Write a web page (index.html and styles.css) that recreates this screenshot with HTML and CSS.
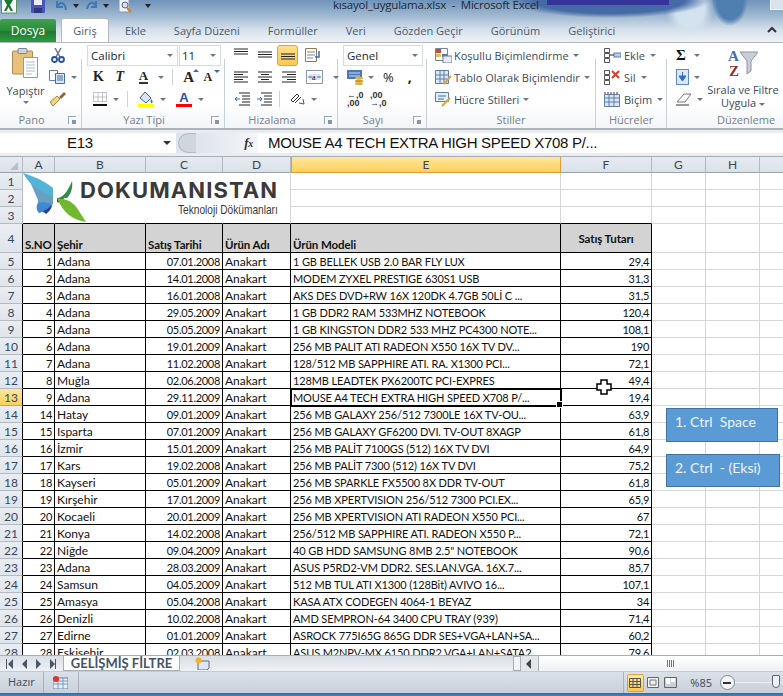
FILE: index.html
```html
<!DOCTYPE html>
<html lang="tr">
<head>
  <meta charset="UTF-8">
  <title>kısayol_uygulama.xlsx - Microsoft Excel</title>
  <link rel="stylesheet" href="styles.css">
</head>
<body>
  <div class="window">
    <div class="top">
      <div class="titlebar">
        <svg class="qa qa-excel" width="16" height="14" viewBox="0 0 16 14"><rect x="0.5" y="-3" width="15" height="16" fill="#fff" stroke="#5f8f66"/><path d="M3 0l3 5-3 6h2.500l2-4 2 4H12L9 5l3-5" fill="#1c7a35"/></svg>
        <svg class="qa qa-save" width="14" height="13" viewBox="0 0 14 13"><rect y="-2" width="14" height="15" rx="1" fill="#4a55b5"/><rect x="3" y="-2" width="8" height="7" fill="#e8edf6"/><rect x="3" y="8" width="8" height="5" fill="#2f3680"/></svg>
        <svg class="qa qa-undo" width="15" height="12" viewBox="0 0 15 12"><path d="M4 1v6h6M4 7c3-6 8-5 9 3" fill="none" stroke="#3f78b6" stroke-width="2"/></svg>
        <span class="qa-arrow"></span>
        <svg class="qa qa-redo" width="14" height="12" viewBox="0 0 14 12"><path d="M10 1v6H5M10 7C8 1 3 1 1 9" fill="none" stroke="#3f78b6" stroke-width="2"/></svg>
        <span class="qa-arrow qa-arrow-2"></span>
        <svg class="qa qa-preview" width="13" height="14" viewBox="0 0 13 14"><rect y="-2" width="10" height="14" fill="#eef2f8" stroke="#8a99ad"/><circle cx="6" cy="5" r="3" fill="#cfe1f2" stroke="#56687f"/><path d="M8 8l4 4" stroke="#c9862a" stroke-width="2"/></svg>
        <span class="qa-custom"></span>
        <span class="doc-title">kısayol_uygulama.xlsx &nbsp;-&nbsp; Microsoft Excel</span>
        <span class="win-btn"></span>
      </div>
      <div class="tabs">
        <div class="file-tab">Dosya</div>
        <div class="tab tab-active">Giriş</div>
        <div class="tab">Ekle</div>
        <div class="tab">Sayfa Düzeni</div>
        <div class="tab">Formüller</div>
        <div class="tab">Veri</div>
        <div class="tab">Gözden Geçir</div>
        <div class="tab">Görünüm</div>
        <div class="tab">Geliştirici</div>
        <svg class="ribbon-toggle" width="12" height="8" viewBox="0 0 12 8"><path d="M2 6l4-4 4 4" fill="none" stroke="#333" stroke-width="2"/></svg>
      </div>
    </div>

    <div class="ribbon">
      <section class="group g-pano">
        <div class="group-body pano-body">
          <div class="paste">
            <svg width="27" height="31" viewBox="0 0 27 31"><rect x="0.500" y="3" width="20" height="23" rx="1" fill="#e8c27a" stroke="#a98a55"/><rect x="6" y="0.500" width="9" height="5" rx="1" fill="#cdd3da" stroke="#7d8792"/><path d="M11.500 9.500h14v20h-14z" fill="#fff" stroke="#8b9aae"/><path d="M14 14h9M14 17h9M14 20h9M14 23h9M14 26h6" stroke="#a9bcd2"/></svg>
            <span class="paste-text">Yapıştır</span>
            <span class="arrow"></span>
          </div>
          <div class="pano-tools">
            <svg width="14" height="15" viewBox="0 0 14 15"><path d="M4 0l5 9M10 0L5 9" stroke="#6c7a8b" stroke-width="1.500"/><circle cx="3.500" cy="11.500" r="2.500" fill="none" stroke="#2b4f9c" stroke-width="1.800"/><circle cx="10.500" cy="11.500" r="2.500" fill="none" stroke="#2b4f9c" stroke-width="1.800"/></svg>
            <div class="pano-copy"><svg width="16" height="14" viewBox="0 0 16 14"><path d="M.5.500h8v10h-8z" fill="#fff" stroke="#5d7ea8"/><path d="M6.500 3.500h9v10h-9z" fill="#dbe8f6" stroke="#3f6ea6"/><path d="M8 6h6M8 8h6M8 10h6" stroke="#3f6ea6"/></svg><span class="arrow"></span></div>
            <svg width="17" height="15" viewBox="0 0 17 15"><path d="M10 6l5-5 2 2-5 5z" fill="#8b6a38"/><path d="M11 8L8 5 1 11l3 4z" fill="#f0d484" stroke="#a9863f"/></svg>
          </div>
        </div>
        <div class="group-label has-launcher">Pano<span class="launcher"></span></div>
      </section>

      <section class="group g-font">
        <div class="group-body">
          <div class="row combo-row">
            <div class="combo combo-font">Calibri<span class="arrow"></span></div>
            <div class="combo combo-size">11<span class="arrow"></span></div>
          </div>
          <div class="row font-row">
            <b class="fb">K</b>
            <i class="fi">T</i>
            <span class="fu">A</span><span class="arrow"></span>
            <span class="vsep"></span>
            <span class="grow">A<em></em></span>
            <span class="shrink">A<em></em></span>
          </div>
          <div class="row font-row2">
            <svg width="14" height="14" viewBox="0 0 14 14"><path d="M.5.500h13v9H.5zM5 .5v9M9.500.5v9M.5 5h13" fill="none" stroke="#8a8f96" stroke-dasharray="1 1"/><path d="M0 13h14" stroke="#111" stroke-width="2"/></svg>
            <span class="arrow"></span>
            <span class="vsep"></span>
            <svg width="16" height="16" viewBox="0 0 16 16"><path d="M7 1l6 6-5 5-6-5z" fill="#d8e6f4" stroke="#41618c"/><path d="M13 8c2 2 2 3 1 4s-2-1-1-4z" fill="#2f6fc0"/><rect y="13" width="16" height="3" fill="#ffff00"/></svg>
            <span class="arrow"></span>
            <span class="colorA">A</span>
            <span class="arrow"></span>
          </div>
        </div>
        <div class="group-label has-launcher">Yazı Tipi<span class="launcher"></span></div>
      </section>

      <section class="group g-align">
        <div class="group-body">
          <div class="row align-row">
            <svg class="lines" width="14" height="14" viewBox="0 0 14 14"><path d="M0 1h14M0 3.500h14M0 6h14" stroke="#222"/></svg>
            <svg class="lines" width="14" height="14" viewBox="0 0 14 14"><path d="M0 4h14M0 6.500h14M0 9h14" stroke="#222"/></svg>
            <div class="align-active"><svg width="14" height="14" viewBox="0 0 14 14"><path d="M0 6h14M0 8.500h14M0 11h14" stroke="#222"/></svg></div>
            <svg width="16" height="14" viewBox="0 0 16 14"><path d="M.5.500h11v13H.5z" fill="#fff" stroke="#8d7a58"/><path d="M2 4h8M2 7h8M2 10h6" stroke="#7b8797"/><path d="M14 3v6H10" fill="none" stroke="#2f6fc0" stroke-width="1.500"/></svg>
          </div>
          <div class="row align-row">
            <svg class="lines" width="14" height="14" viewBox="0 0 14 14"><path d="M0 2h14M0 4.500h9M0 7h14M0 9.500h9M0 12h14" stroke="#222"/></svg>
            <svg class="lines" width="14" height="14" viewBox="0 0 14 14"><path d="M0 2h14M3 4.500h8M0 7h14M3 9.500h8M0 12h14" stroke="#222"/></svg>
            <svg class="lines line-right" width="14" height="14" viewBox="0 0 14 14"><path d="M0 2h14M5 4.500h9M0 7h14M5 9.500h9M0 12h14" stroke="#222"/></svg>
            <svg class="merge" width="17" height="14" viewBox="0 0 17 14"><path d="M.5.500h16v13H.5z" fill="#fff" stroke="#8a97a8"/><rect x="3" y="4" width="11" height="6" fill="#d7e4f3"/><path d="M2 7h4M11 7h4" stroke="#2f6fc0"/><text x="6" y="10" font-size="8" font-family="Liberation Serif">a</text></svg>
            <span class="arrow"></span>
          </div>
          <div class="row align-row3">
            <svg width="16" height="14" viewBox="0 0 16 14"><path d="M5 1h11M8 4h8M8 7h8M8 10h8M5 13h11" stroke="#222"/><path d="M6 7H1m2-2L1 7l2 2" fill="none" stroke="#2f6fc0"/></svg>
            <svg width="16" height="14" viewBox="0 0 16 14"><path d="M5 1h11M8 4h8M8 7h8M8 10h8M5 13h11" stroke="#222"/><path d="M1 7h5M4 5l2 2-2 2" fill="none" stroke="#2f6fc0"/></svg>
            <span class="vsep"></span>
            <svg width="15" height="14" viewBox="0 0 15 14"><path d="M1 8l6-6 2 2-6 6zM5 11l6-6" fill="none" stroke="#333"/><path d="M9 11l5 1-1-5" fill="none" stroke="#555"/></svg>
            <span class="arrow"></span>
          </div>
        </div>
        <div class="group-label has-launcher">Hizalama<span class="launcher"></span></div>
      </section>

      <section class="group g-number">
        <div class="group-body">
          <div class="row combo-row"><div class="combo combo-genel">Genel<span class="arrow"></span></div></div>
          <div class="row num-row">
            <svg width="17" height="15" viewBox="0 0 17 15"><rect width="15" height="9" fill="#4a78b8"/><path d="M2 3h11M2 6h11" stroke="#cfe0f3"/><ellipse cx="12" cy="8" rx="4" ry="1.500" fill="#e0b040"/><ellipse cx="12" cy="11" rx="4" ry="1.500" fill="#d19a2a"/><ellipse cx="12" cy="13.500" rx="4" ry="1.500" fill="#e0b040"/></svg>
            <span class="arrow"></span>
            <span class="pct">%</span>
            <span class="comma">,</span>
          </div>
          <div class="row num-row3">
            <span class="dec">←,0<br>,00</span>
            <span class="dec">,00<br>→,0</span>
          </div>
        </div>
        <div class="group-label has-launcher">Sayı<span class="launcher"></span></div>
      </section>

      <section class="group g-styles">
        <div class="group-body">
          <div class="row style-row">
            <svg width="17" height="15" viewBox="0 0 17 15"><path d="M.5.500h12v12H.5z" fill="#fff" stroke="#76859a"/><path d="M1 1h5v4H1z" fill="#c9483c"/><path d="M7 6h5v3H7z" fill="#4a78b8"/><path d="M1 6h5v3H1z" fill="#e0c060"/><rect x="8" y="8" width="9" height="7" fill="#e8edf3" stroke="#6c7a8b"/></svg>
            <span>Koşullu Biçimlendirme</span><span class="arrow"></span>
          </div>
          <div class="row style-row">
            <svg width="17" height="15" viewBox="0 0 17 15"><path d="M.5.500h13v13H.5z" fill="#dce8f5" stroke="#5f7fa8"/><path d="M0 5h14M0 9h14M5 0v14M9 0v14" stroke="#5f7fa8"/><path d="M9 14l7-8" stroke="#d9a441" stroke-width="2"/></svg>
            <span>Tablo Olarak Biçimlendir</span><span class="arrow"></span>
          </div>
          <div class="row style-row">
            <svg width="17" height="15" viewBox="0 0 17 15"><path d="M.5.500h13v9H.5z" fill="#e6eef8" stroke="#5f7fa8"/><path d="M3 4h8M3 7h6" stroke="#3f6ea6"/><path d="M7 14l8-8" stroke="#d9a441" stroke-width="2"/></svg>
            <span>Hücre Stilleri</span><span class="arrow"></span>
          </div>
        </div>
        <div class="group-label">Stiller</div>
      </section>

      <section class="group g-cells">
        <div class="group-body">
          <div class="row cell-row">
            <svg width="17" height="15" viewBox="0 0 17 15"><path d="M.5.500h5v4h-5zM.5 10.500h5v4h-5zM.5 5.500h5v4h-5z" fill="#fff" stroke="#555"/><rect x="10" y="5" width="7" height="4" fill="#b9cfe8" stroke="#5f7fa8"/><path d="M6 7h4" stroke="#222"/></svg>
            <span>Ekle</span><span class="arrow"></span>
          </div>
          <div class="row cell-row">
            <svg width="17" height="15" viewBox="0 0 17 15"><path d="M.5.500h5v4h-5zM.5 10.500h5v4h-5zM.5 5.500h5v4h-5z" fill="#fff" stroke="#555"/><path d="M8 1l7 7M15 1L8 8" stroke="#d2402c" stroke-width="2"/></svg>
            <span>Sil</span><span class="arrow"></span>
          </div>
          <div class="row cell-row">
            <svg width="17" height="15" viewBox="0 0 17 15"><path d="M.5 2.500h15v12H.5z" fill="#dbe6f3" stroke="#5f7fa8"/><path d="M0 6h16M0 10h16M5 3v12M10 3v12" stroke="#5f7fa8"/><path d="M1 0v2M4 0v2M7 0v2M10 0v2M13 0v2" stroke="#333"/></svg>
            <span>Biçim</span><span class="arrow"></span>
          </div>
        </div>
        <div class="group-label">Hücreler</div>
      </section>

      <section class="group g-edit">
        <div class="group-body edit-body">
          <div class="edit-tools">
            <div class="row edit-row"><span class="sigma">Σ</span><span class="arrow"></span></div>
            <div class="row edit-row"><svg width="13" height="16" viewBox="0 0 13 16"><rect x=".5" y=".5" width="12" height="15" fill="#dce8f6" stroke="#5f8cc0"/><path d="M6.500 3v6M3 7l3.500 5L10 7z" fill="#2f6fc0" stroke="#2f6fc0"/></svg><span class="arrow"></span></div>
            <div class="row edit-row"><svg width="16" height="13" viewBox="0 0 16 13"><path d="M1 9l7-8h7l-6 8z" fill="#fff" stroke="#777"/><path d="M0 12h13" stroke="#333"/></svg><span class="arrow"></span></div>
          </div>
          <div class="sort">
            <svg width="30" height="30" viewBox="0 0 30 30"><path d="M12 5h18l-7 9v10l-4 3V14z" fill="#c9ced6" stroke="#8e96a2"/><text x="0" y="14" font-size="15" font-weight="700" font-family="Liberation Serif" fill="#3c6fb5">A</text><text x="1" y="29" font-size="15" font-weight="700" font-family="Liberation Serif" fill="#8f2f2f">Z</text></svg>
            <span>Sırala ve Filtre</span>
            <span>Uygula<i class="arrow"></i></span>
          </div>
        </div>
        <div class="group-label edit-label">Düzenleme</div>
      </section>
    </div>

    <div class="formula-bar">
      <div class="name-box">E13<span class="name-arrow"></span></div>
      <div class="formula-mid"><span class="knob"></span><i class="fx">f<small>x</small></i></div>
      <div class="formula-input">MOUSE A4 TECH EXTRA HIGH SPEED X708 P/...</div>
    </div>

    <div class="sheet">
      <table class="cells">
        <colgroup>
          <col class="c-rh"><col class="c-a"><col class="c-b"><col class="c-c"><col class="c-d"><col class="c-e"><col class="c-f"><col class="c-g"><col class="c-g"><col class="c-g">
        </colgroup>
        <tr class="col-head"><th class="corner"><span></span></th><th>A</th><th>B</th><th>C</th><th>D</th><th class="on">E</th><th>F</th><th>G</th><th>H</th><th></th></tr>
        <tr><th>1</th><td></td><td></td><td></td><td></td><td></td><td></td><td></td><td></td><td></td></tr>
        <tr><th>2</th><td></td><td></td><td></td><td></td><td></td><td></td><td></td><td></td><td></td></tr>
        <tr class="before-head"><th>3</th><td></td><td></td><td></td><td></td><td></td><td></td><td></td><td></td><td></td></tr>
        <tr class="head"><th class="bl">4</th><td class="d">S.NO</td><td class="d">Şehir</td><td class="d">Satış Tarihi</td><td class="d">Ürün Adı</td><td class="d">Ürün Modeli</td><td class="d mid">Satış Tutarı</td><td></td><td></td><td></td></tr>
        <tr><th class="bl">5</th><td class="d r">1</td><td class="d">Adana</td><td class="d r">07.01.2008</td><td class="d">Anakart</td><td class="d m">1 GB BELLEK USB 2.0 BAR FLY LUX</td><td class="d r">29,4</td><td></td><td></td><td></td></tr>
        <tr><th class="bl">6</th><td class="d r">2</td><td class="d">Adana</td><td class="d r">14.01.2008</td><td class="d">Anakart</td><td class="d m">MODEM ZYXEL PRESTIGE 630S1 USB</td><td class="d r">31,3</td><td></td><td></td><td></td></tr>
        <tr><th class="bl">7</th><td class="d r">3</td><td class="d">Adana</td><td class="d r">16.01.2008</td><td class="d">Anakart</td><td class="d m">AKS DES DVD+RW 16X 120DK 4.7GB 50Lİ C ...</td><td class="d r">31,5</td><td></td><td></td><td></td></tr>
        <tr><th class="bl">8</th><td class="d r">4</td><td class="d">Adana</td><td class="d r">29.05.2009</td><td class="d">Anakart</td><td class="d m">1 GB DDR2 RAM 533MHZ NOTEBOOK</td><td class="d r">120,4</td><td></td><td></td><td></td></tr>
        <tr><th class="bl">9</th><td class="d r">5</td><td class="d">Adana</td><td class="d r">05.05.2009</td><td class="d">Anakart</td><td class="d m">1 GB KINGSTON DDR2 533 MHZ PC4300 NOTE...</td><td class="d r">108,1</td><td></td><td></td><td></td></tr>
        <tr><th class="bl">10</th><td class="d r">6</td><td class="d">Adana</td><td class="d r">19.01.2009</td><td class="d">Anakart</td><td class="d m">256 MB PALIT ATI RADEON X550 16X TV DV...</td><td class="d r">190</td><td></td><td></td><td></td></tr>
        <tr><th class="bl">11</th><td class="d r">7</td><td class="d">Adana</td><td class="d r">11.02.2008</td><td class="d">Anakart</td><td class="d m">128/512 MB SAPPHIRE ATI. RA. X1300 PCI...</td><td class="d r">72,1</td><td></td><td></td><td></td></tr>
        <tr><th class="bl">12</th><td class="d r">8</td><td class="d">Muğla</td><td class="d r">02.06.2008</td><td class="d">Anakart</td><td class="d m">128MB LEADTEK PX6200TC PCI-EXPRES</td><td class="d r">49,4</td><td></td><td></td><td></td></tr>
        <tr><th class="bl on">13</th><td class="d r">9</td><td class="d">Adana</td><td class="d r">29.11.2009</td><td class="d">Anakart</td><td class="d m selected">MOUSE A4 TECH EXTRA HIGH SPEED X708 P/...</td><td class="d r">19,4</td><td></td><td></td><td></td></tr>
        <tr><th class="bl">14</th><td class="d r">14</td><td class="d">Hatay</td><td class="d r">09.01.2009</td><td class="d">Anakart</td><td class="d m">256 MB GALAXY 256/512 7300LE 16X TV-OU...</td><td class="d r">63,9</td><td></td><td></td><td></td></tr>
        <tr><th class="bl">15</th><td class="d r">15</td><td class="d">Isparta</td><td class="d r">07.01.2009</td><td class="d">Anakart</td><td class="d m">256 MB GALAXY GF6200 DVI. TV-OUT 8XAGP</td><td class="d r">61,8</td><td></td><td></td><td></td></tr>
        <tr><th class="bl">16</th><td class="d r">16</td><td class="d">İzmir</td><td class="d r">15.01.2009</td><td class="d">Anakart</td><td class="d m">256 MB PALİT 7100GS (512) 16X TV DVI</td><td class="d r">64,9</td><td></td><td></td><td></td></tr>
        <tr><th class="bl">17</th><td class="d r">17</td><td class="d">Kars</td><td class="d r">19.02.2008</td><td class="d">Anakart</td><td class="d m">256 MB PALİT 7300 (512) 16X TV DVI</td><td class="d r">75,2</td><td></td><td></td><td></td></tr>
        <tr><th class="bl">18</th><td class="d r">18</td><td class="d">Kayseri</td><td class="d r">05.01.2009</td><td class="d">Anakart</td><td class="d m">256 MB SPARKLE FX5500 8X DDR TV-OUT</td><td class="d r">61,8</td><td></td><td></td><td></td></tr>
        <tr><th class="bl">19</th><td class="d r">19</td><td class="d">Kırşehir</td><td class="d r">17.01.2009</td><td class="d">Anakart</td><td class="d m">256 MB XPERTVISION 256/512 7300 PCI.EX...</td><td class="d r">65,9</td><td></td><td></td><td></td></tr>
        <tr><th class="bl">20</th><td class="d r">20</td><td class="d">Kocaeli</td><td class="d r">20.01.2009</td><td class="d">Anakart</td><td class="d m">256 MB XPERTVISION ATI RADEON X550 PCI...</td><td class="d r">67</td><td></td><td></td><td></td></tr>
        <tr><th class="bl">21</th><td class="d r">21</td><td class="d">Konya</td><td class="d r">14.02.2008</td><td class="d">Anakart</td><td class="d m">256/512 MB SAPPHIRE ATI. RADEON X550 P...</td><td class="d r">72,1</td><td></td><td></td><td></td></tr>
        <tr><th class="bl">22</th><td class="d r">22</td><td class="d">Niğde</td><td class="d r">09.04.2009</td><td class="d">Anakart</td><td class="d m">40 GB HDD SAMSUNG 8MB 2.5" NOTEBOOK</td><td class="d r">90,6</td><td></td><td></td><td></td></tr>
        <tr><th class="bl">23</th><td class="d r">23</td><td class="d">Adana</td><td class="d r">28.03.2009</td><td class="d">Anakart</td><td class="d m">ASUS P5RD2-VM DDR2. SES.LAN.VGA. 16X.7...</td><td class="d r">85,7</td><td></td><td></td><td></td></tr>
        <tr><th class="bl">24</th><td class="d r">24</td><td class="d">Samsun</td><td class="d r">04.05.2009</td><td class="d">Anakart</td><td class="d m">512 MB TUL ATI X1300 (128Bit) AVIVO 16...</td><td class="d r">107,1</td><td></td><td></td><td></td></tr>
        <tr><th class="bl">25</th><td class="d r">25</td><td class="d">Amasya</td><td class="d r">05.04.2008</td><td class="d">Anakart</td><td class="d m">KASA ATX CODEGEN 4064-1 BEYAZ</td><td class="d r">34</td><td></td><td></td><td></td></tr>
        <tr><th class="bl">26</th><td class="d r">26</td><td class="d">Denizli</td><td class="d r">10.02.2008</td><td class="d">Anakart</td><td class="d m">AMD SEMPRON-64 3400 CPU TRAY (939)</td><td class="d r">71,4</td><td></td><td></td><td></td></tr>
        <tr><th class="bl">27</th><td class="d r">27</td><td class="d">Edirne</td><td class="d r">01.01.2009</td><td class="d">Anakart</td><td class="d m">ASROCK 775I65G 865G DDR SES+VGA+LAN+SA...</td><td class="d r">60,2</td><td></td><td></td><td></td></tr>
        <tr><th class="bl">28</th><td class="d r">28</td><td class="d">Eskişehir</td><td class="d r">02.03.2008</td><td class="d">Anakart</td><td class="d m">ASUS M2NPV-MX 6150 DDR2 VGA+LAN+SATA2</td><td class="d r">79,6</td><td></td><td></td><td></td></tr>
      </table>

      <div class="logo">
        <svg class="logo-mark" width="63" height="50" viewBox="0 0 63 50">
          <path d="M0 0c10 3 22 8 30 15v12C21 24 7 13 0 0z" fill="#55b4d6"/>
          <path d="M8 11c7 6 15 10 22 13v7c-3 4-6 7-9 9-5-2-7-7-6-13z" fill="#6a9fc4"/>
          <path d="M15 30c4-1 8-1 13 1-2 4-7 8-12 9-3-3-3-7-1-10z" fill="#3d8ad2"/>
          <path d="M20 38c3-1 6-3 8-6l1 1c-1 3-3 6-6 8z" fill="#27409a"/>
          <path d="M34 25c5 0 10-5 15-17 1 7-1 13-5 17z" fill="#2f8f48"/>
          <path d="M34 25l7 0-3 5-4-1z" fill="#166a36"/>
          <path d="M34 25c9 1 15 3 20 10l9 14c-13-2-23-9-29-24z" fill="#6fb82f"/>
        </svg>
        <div class="logo-text">
          <div class="logo-name">DOKUMANISTAN</div>
          <div class="logo-sub">Teknoloji Dökümanları</div>
        </div>
      </div>

      <svg class="cursor" width="16" height="16" viewBox="0 0 16 16"><path d="M5 1h6v4h4v6h-4v4H5v-4H1V5h4z" fill="#fff" stroke="#000" stroke-width="1.500"/></svg>
      <div class="note note-1">1. Ctrl &nbsp;Space</div>
      <div class="note note-2">2. Ctrl &nbsp;- (Eksi)</div>
    </div>

    <div class="sheet-tabs">
      <div class="sheet-nav">
        <svg width="50" height="10" viewBox="0 0 50 10"><path d="M0 0v10h1V0zM7 0L2 5l5 5zM21 0l-5 5 5 5zM30 0l5 5-5 5zM44 0l5 5-5 5zM50 0v10h-1V0z" fill="#4a5666"/></svg>
      </div>
      <div class="sheet-tab">GELİŞMİŞ FİLTRE</div>
      <div class="new-tab">
        <svg width="15" height="13" viewBox="0 0 15 13"><path d="M3 4h11v7l-2 2H3z" fill="#dfe8f2" stroke="#5c6d82"/><circle cx="3.500" cy="3.500" r="3" fill="#f1b22e"/></svg>
      </div>
      <div class="tab-fill"></div>
      <div class="splitter"></div>
      <div class="scroll-left"></div>
      <div class="scroll-thumb"><span></span></div>
    </div>

    <div class="statusbar">
      <span class="ready">Hazır</span>
      <span class="status-macro">
        <svg width="15" height="13" viewBox="0 0 15 13"><rect y="2" width="15" height="11" fill="#e6eef7" stroke="#5f7fa8"/><path d="M0 5h15M0 8h15M5 2v11M10 2v11" stroke="#7d9abd"/><circle cx="3" cy="3" r="3" fill="#d8372b"/></svg>
      </span>
      <div class="status-right">
        <span class="view view-on"><svg width="12" height="10" viewBox="0 0 12 10"><path d="M.5.500h11v9H.5zM0 3.500h12M0 6.500h12M4 0v10M8 0v10" fill="none" stroke="#555"/></svg></span>
        <span class="view"><svg width="12" height="11" viewBox="0 0 12 11"><path d="M.5.500h11v10H.5z" fill="#eef1f5" stroke="#666"/><path d="M3 3h6v5H3z" fill="none" stroke="#777"/></svg></span>
        <span class="view"><svg width="13" height="11" viewBox="0 0 13 11"><path d="M.5.500h12v10H.5z" fill="#c9d1dc" stroke="#666"/><path d="M2 1h4v6H2zM7 1h4v4H7z" fill="#fff"/></svg></span>
        <span class="zoom-level">%85</span>
        <span class="zoom-minus"></span>
        <span class="zoom-track"><i></i></span>
      </div>
    </div>
    <div class="taskbar-edge"></div>
  </div>
</body>
</html>
```

FILE: styles.css
```css
* {
  box-sizing: border-box;
}
html, body {
  margin: 0;
  padding: 0;
}
body {
  width: 783px;
  height: 696px;
  overflow: hidden;
  font-family: "Open Sans", sans-serif;
  font-size: 11px;
  color: #3b4a5e;
  background: #fff;
}
svg {
  display: block;
  flex: none;
}
.window {
  display: flex;
  flex-direction: column;
  height: 696px;
}

/* title + tabs share the blurred glass background */
.top {
  height: 43px;
  background:
    linear-gradient(#34349a, #34349a) 547px 0 / 122px 5px no-repeat,
    radial-gradient(ellipse 100px 18px at 610px 0, #466aa6 75%, transparent 100%),
    radial-gradient(ellipse 18px 26px at 730px 0, #4f7fb0 75%, transparent 100%),
    radial-gradient(ellipse 24px 30px at 690px 8px, #d3e2ee 60%, transparent 100%),
    linear-gradient(#6f93ba 0, #a3bbd3 40%, #d5e0ea 70%, #eef2f6 100%);
  border-bottom: 1px solid #b5b9be;
}
.titlebar {
  height: 17px;
  display: flex;
  align-items: flex-start;
  overflow: hidden;
}
.qa-excel { margin-left: 1px; }
.qa-save { margin-left: 14px; }
.qa-undo { margin-left: 8px; }
.qa-arrow, .qa-custom {
  width: 0;
  height: 0;
  margin: 4px 0 0 5px;
  border: 3px solid transparent;
  border-top: 4px solid #222;
  border-bottom: 0;
}
.qa-redo { margin-left: 7px; }
.qa-arrow-2 { margin-left: 3px; }
.qa-preview { margin-left: 10px; }
.qa-custom { margin-left: 13px; }
.doc-title {
  margin-left: 182px;
  margin-top: -3px;
  font-size: 11.5px;
  line-height: 16px;
  letter-spacing: -0.2px;
  color: #1d2735;
  white-space: nowrap;
}
.win-btn {
  margin-left: auto;
  width: 13px;
  height: 10px;
  border: 1px solid #eef3f8;
  border-right: 0;
  border-top: 0;
  background: #d9e3ec;
}
.tabs {
  height: 25px;
  display: flex;
  align-items: flex-end;
  position: relative;
}
.file-tab {
  width: 56px;
  height: 23px;
  margin-right: 5px;
  border-radius: 2px 2px 0 0;
  background: linear-gradient(#3fa34d, #2a8a39 50%, #1e7a30 55%, #2f9a41);
  color: #fff;
  font-size: 12px;
  line-height: 23px;
  text-align: center;
}
.tab {
  height: 23px;
  margin-right: 28px;
  font-size: 11px;
  line-height: 23px;
  color: #4b5a6d;
  white-space: nowrap;
}
.tab-active {
  width: 48px;
  height: 24px;
  margin-right: 16px;
  background: #fff;
  border: 1px solid #b5b9be;
  border-bottom: 0;
  border-radius: 3px 3px 0 0;
  text-align: center;
}
.ribbon-toggle {
  position: absolute;
  right: 5px;
  top: 9px;
}

/* ribbon */
.ribbon {
  height: 87px;
  display: flex;
  background: linear-gradient(#fff 70%, #f3f5f8);
  border-bottom: 2px solid #aeb3b9;
}
.group {
  display: flex;
  flex-direction: column;
  position: relative;
  border-right: 1px solid #c9d0d8;
  border-image: linear-gradient(transparent 17px, #c9d0d8 17px) 1;
}
.group-body {
  height: 69px;
  padding-top: 1px;
}
.group-label {
  height: 16px;
  line-height: 16px;
  text-align: center;
  color: #76808e;
  position: relative;
  font-size: 11px;
}
.has-launcher {
  padding-right: 18px;
}
.edit-label {
  padding-left: 42px;
}
.launcher {
  position: absolute;
  right: 5px;
  top: 4px;
  width: 8px;
  height: 8px;
  border: 1px solid #a0a8b3;
  border-width: 1px 0 0 1px;
}
.launcher::after {
  content: "";
  position: absolute;
  right: 0;
  bottom: 0;
  width: 4px;
  height: 4px;
  background: #8a939f;
}
.arrow {
  display: inline-block;
  width: 0;
  height: 0;
  flex: none;
  border: 3px solid transparent;
  border-top: 3px solid #6b7786;
  border-bottom: 0;
}
.row {
  height: 22px;
  display: flex;
  align-items: center;
  white-space: nowrap;
}
.vsep {
  width: 1px;
  height: 16px;
  background: #cdd2d8;
  flex: none;
}
.g-pano { width: 82px; }
.g-font { width: 143px; }
.g-align { width: 113px; }
.g-number { width: 89px; }
.g-styles { width: 169px; }
.g-cells { width: 71px; }
.g-edit { width: 116px; border-right: 0; border-image: none; }

.pano-body {
  display: flex;
  padding-top: 5px;
}
.paste {
  width: 49px;
  padding-left: 2px;
  display: flex;
  flex-direction: column;
  align-items: center;
  color: #3b4a5e;
}
.paste-text { margin-top: 4px; line-height: 15px; }
.paste .arrow { margin-top: 3px; }
.pano-tools {
  display: flex;
  flex-direction: column;
  gap: 6px;
}
.pano-tools > svg:first-child { margin-left: 2px; }
.pano-copy {
  display: flex;
  align-items: center;
  gap: 6px;
  height: 16px;
}

.combo-row {
  padding-left: 5px;
  gap: 1px;
}
.combo {
  height: 21px;
  border: 1px solid #d6dbe1;
  line-height: 19px;
  padding-left: 3px;
  font-size: 11.5px;
  color: #1e2733;
  position: relative;
}
.combo .arrow {
  position: absolute;
  right: 4px;
  top: 8px;
}
.combo-font { width: 91px; }
.combo-size { width: 42px; padding-left: 2px; }
.combo-genel { width: 80px; }
.font-row, .font-row2, .align-row, .align-row3, .num-row, .num-row3 { padding-left: 11px; }
.fb, .fi {
  font-family: "Liberation Serif", serif;
  font-size: 14px;
  color: #222;
  width: 23px;
}
.fi { font-weight: 700; }
.fu {
  font-family: "Liberation Serif", serif;
  font-weight: 700;
  font-size: 13px;
  color: #222;
  border-bottom: 2px solid #333;
  line-height: 12px;
  margin: 0 10px 0 1px;
}
.font-row .vsep { margin: 0 10px 0 8px; }
.grow, .shrink {
  font-family: "Liberation Serif", serif;
  font-weight: 700;
  font-size: 15px;
  color: #222;
  width: 21px;
  position: relative;
}
.shrink { font-size: 12px; }
.grow em, .shrink em {
  position: absolute;
  left: 10px;
  top: 0;
  border: 3px solid transparent;
  border-bottom: 3px solid #2f6fc0;
  border-top: 0;
}
.shrink em {
  border-bottom: 0;
  border-top: 3px solid #2f6fc0;
}
.font-row2 .arrow { margin-left: 6px; }
.font-row2 .vsep { margin: 0 10px 0 8px; }
.colorA {
  font-family: "Liberation Sans", sans-serif;
  font-weight: 700;
  font-size: 13px;
  line-height: 13px;
  color: #2b4f9c;
  border-bottom: 3px solid #f00;
  margin-left: 10px;
  width: 16px;
  text-align: center;
}
.align-row { padding-left: 9px; gap: 10px; }
.align-active {
  width: 21px;
  height: 21px;
  margin-left: -5px;
  margin-right: -3px;
  background: linear-gradient(#ffe08a, #fcc654);
  border: 1px solid #d9a441;
  border-radius: 3px;
  display: flex;
  align-items: center;
  justify-content: center;
}
.align-row3 { padding-left: 9px; gap: 6px; }
.align-row3 .vsep { margin-left: 1px; margin-right: 4px; }
.num-row { padding-left: 9px; }
.num-row .arrow { margin-left: 4px; }
.pct {
  margin-left: 9px;
  font-size: 13px;
  color: #222;
}
.comma {
  margin-left: 14px;
  font-weight: 700;
  font-size: 14px;
  color: #222;
  line-height: 10px;
}
.num-row3 { padding-left: 9px; gap: 8px; }
.dec {
  width: 15px;
  font-family: "Liberation Sans", sans-serif;
  font-size: 9px;
  line-height: 8px;
  font-weight: 700;
  color: #333;
  white-space: nowrap;
}
.style-row, .cell-row {
  padding-left: 8px;
  gap: 2px;
  color: #3b4a5e;
  font-size: 11px;
}
.cell-row { gap: 3px; }
.style-row .arrow, .cell-row .arrow { margin-left: 2px; }
.edit-body {
  display: flex;
}
.edit-tools { width: 60px; }
.edit-row {
  padding-left: 9px;
  gap: 5px;
}
.sigma {
  width: 13px;
  font-family: "Liberation Serif", serif;
  font-weight: 700;
  font-size: 15px;
  color: #111;
}
.sort {
  display: flex;
  flex-direction: column;
  align-items: center;
  width: 56px;
  line-height: 13px;
  padding-top: 3px;
  white-space: nowrap;
  margin-left: -12px;
}
.sort svg { margin-bottom: 6px; }
.sort .arrow { margin-left: 3px; vertical-align: middle; }

/* formula bar */
.formula-bar {
  height: 27px;
  display: flex;
  padding: 3px 0 3px;
  background: #e9edf2;
  border-bottom: 1px solid #a9aeb5;
  font-family: "Liberation Sans", sans-serif;
  font-size: 15px;
  letter-spacing: -0.3px;
  color: #111;
}
.name-box {
  width: 176px;
  background: #fff;
  text-align: center;
  padding-right: 16px;
  line-height: 20px;
  position: relative;
}
.name-arrow {
  position: absolute;
  right: 5px;
  top: 8px;
  border: 4px solid transparent;
  border-top: 4px solid #333;
  border-bottom: 0;
}
.formula-mid {
  width: 82px;
  display: flex;
  align-items: center;
  justify-content: space-between;
  padding-right: 5px;
  background: linear-gradient(90deg, #dfe5ec 30%, #f5f7fa);
}
.knob {
  width: 18px;
  height: 20px;
  margin-left: 2px;
  border-radius: 10px 0 0 10px;
  background: #cfd6de;
  border: 1px solid #b3bac3;
  border-right: 0;
}
.fx {
  font-family: "Liberation Serif", serif;
  font-weight: 700;
  font-size: 13px;
  color: #333;
}
.fx small { font-size: 10px; }
.formula-input {
  flex: 1;
  background: #fff;
  padding-left: 10px;
  line-height: 20px;
  white-space: nowrap;
}

/* sheet */
.sheet {
  height: 498px;
  position: relative;
  overflow: hidden;
  background: #fff;
}
.cells {
  border-collapse: separate;
  border-spacing: 0;
  table-layout: fixed;
  width: 814px;
  font-family: "Lato", sans-serif;
  font-size: 12px;
  color: #111;
}
.c-rh { width: 23px; }
.c-a { width: 32px; }
.c-b { width: 91px; }
.c-c { width: 77px; }
.c-d { width: 68px; }
.c-e { width: 270px; }
.c-f { width: 91px; }
.c-g { width: 54px; }
.cells tr {
  height: 17px;
}
.cells th {
  background: linear-gradient(#eaeef3, #dfe5ec);
  border-right: 1px solid #b4bac2;
  border-bottom: 1px solid #b4bac2;
  font-weight: 400;
  font-size: 12px;
  line-height: 15px;
  color: #38465a;
  padding: 0;
  text-align: center;
  vertical-align: middle;
}
.cells .col-head {
  height: 16px;
}
.cells .col-head th {
  background: linear-gradient(#e6ebf0, #dae1e8);
  border-bottom: 1px solid #9aa3ae;
  color: #3a4656;
}
.cells .col-head th.on {
  background: linear-gradient(#ffe69e, #fdd158);
  border-bottom: 1px solid #e39d3a;
  border-left: 1px solid #e39d3a;
}
.cells th.on {
  background: linear-gradient(#ffe69e, #fdd158);
  border-right: 1px solid #e39d3a;
  border-bottom: 1px solid #e39d3a;
}
.corner {
  position: relative;
}
.corner span {
  position: absolute;
  right: 4px;
  bottom: 2px;
  border-style: solid;
  border-width: 0 0 8px 8px;
  border-color: transparent transparent #b6bfca transparent;
}
.cells td {
  border-right: 1px solid #d6d6d6;
  border-bottom: 1px solid #d6d6d6;
  padding: 1px 2px 0;
  line-height: 15px;
  overflow: hidden;
  white-space: nowrap;
}
.cells th.bl {
  border-right-color: #000;
}
.before-head td {
  border-bottom-color: #000;
}
.before-head td:nth-child(n+8) {
  border-bottom-color: #d6d6d6;
}
.cells .d {
  border-right: 1px solid #000;
  border-bottom: 1px solid #000;
}
.cells .r {
  text-align: right;
  font-size: 11px;
  letter-spacing: -0.3px;
}
.cells .m {
  font-size: 11px;
  letter-spacing: -0.12px;
}
.cells .head {
  height: 29px;
}
.head .d {
  background: #d3d3d3;
  font-weight: 700;
  font-size: 11.5px;
  letter-spacing: -0.1px;
  vertical-align: bottom;
}
.head .mid {
  vertical-align: middle;
  text-align: center;
}
.cells .selected {
  position: relative;
  overflow: visible;
  outline: 2px solid #000;
  outline-offset: -1px;
}
.selected::after {
  content: "";
  position: absolute;
  right: -3px;
  bottom: -3px;
  width: 5px;
  height: 5px;
  background: #000;
  border: 1px solid #fff;
}

/* things lying over the grid */
.logo {
  position: absolute;
  left: 23px;
  top: 16px;
  width: 267px;
  height: 50px;
  background: #fff;
  display: flex;
}
.logo-text {
  margin-left: -6px;
  padding-top: 6px;
}
.logo-name {
  font-family: "Inter", sans-serif;
  font-weight: 700;
  font-size: 22px;
  line-height: 22px;
  letter-spacing: 1.1px;
  color: #3a3a3c;
  white-space: nowrap;
}
.logo-sub {
  font-family: "Liberation Sans", sans-serif;
  font-size: 13px;
  line-height: 14px;
  color: #3a3a3c;
  margin-left: 98px;
  margin-top: 2px;
  white-space: nowrap;
  transform: scaleX(0.78);
  transform-origin: left center;
}
.cursor {
  position: absolute;
  left: 596px;
  top: 222px;
}
.note {
  position: absolute;
  left: 666px;
  background: #5b9bd5;
  border: 1px solid #41719c;
  color: #eef5fb;
  font-family: "Lato", sans-serif;
  font-size: 14px;
  padding-left: 8px;
  white-space: nowrap;
}
.note-1 {
  top: 251px;
  width: 112px;
  height: 34px;
  line-height: 26px;
}
.note-2 {
  top: 297px;
  width: 114px;
  height: 33px;
  line-height: 25px;
}

/* sheet tabs + scrollbar */
.sheet-tabs {
  height: 17px;
  display: flex;
  align-items: stretch;
  background: linear-gradient(#d9dfe6, #eef1f5);
  border-top: 1px solid #a9aeb5;
  border-bottom: 1px solid #c6cbd2;
}
.sheet-nav {
  width: 63px;
  padding: 3px 0 0 6px;
}
.sheet-tab {
  width: 117px;
  background: #fff;
  border: 1px solid #a9aeb5;
  border-top: 0;
  font-family: "Lato", sans-serif;
  font-weight: 700;
  font-size: 13px;
  line-height: 15px;
  text-align: center;
  color: #44536a;
  white-space: nowrap;
}
.new-tab {
  width: 45px;
  padding: 1px 0 0 15px;
}
.tab-fill { width: 288px; }
.splitter {
  width: 8px;
  background: #f2f4f7;
  border: 1px solid #a9aeb5;
}
.scroll-left {
  width: 17px;
  position: relative;
  background: #e3e7ec;
}
.scroll-left::after {
  content: "";
  position: absolute;
  left: 5px;
  top: 3px;
  border: 5px solid transparent;
  border-right: 5px solid #444;
  border-left: 0;
}
.scroll-thumb {
  flex: 1;
  background: linear-gradient(#fff, #eef1f5);
  border-left: 1px solid #a9aeb5;
  display: flex;
  align-items: center;
  padding-left: 128px;
}
.scroll-thumb span {
  width: 7px;
  height: 7px;
  background: repeating-linear-gradient(90deg, #6d7682 0 1px, transparent 1px 2px);
}

/* status bar */
.statusbar {
  height: 21px;
  display: flex;
  align-items: center;
  background: linear-gradient(#dbe1e8, #c8d0da);
  color: #3b4a5e;
  font-size: 11px;
}
.ready {
  width: 44px;
  height: 21px;
  padding-left: 8px;
  line-height: 20px;
  border-right: 1px solid #a9b2bd;
}
.status-macro {
  width: 35px;
  height: 21px;
  padding: 4px 0 0 9px;
  border-right: 1px solid #a9b2bd;
}
.status-right {
  margin-left: auto;
  display: flex;
  align-items: center;
  border-left: 1px solid #a9b2bd;
  height: 21px;
  width: 160px;
  padding-left: 3px;
}
.view {
  width: 18px;
  height: 18px;
  margin-right: 1px;
  display: flex;
  align-items: center;
  justify-content: center;
}
.view-on {
  background: linear-gradient(#ffe9a8, #fcc654);
  border: 1px solid #d9a441;
  border-radius: 2px;
}
.zoom-level {
  margin-left: 10px;
  color: #3b4a5e;
}
.zoom-minus {
  width: 15px;
  height: 15px;
  margin-left: 8px;
  border-radius: 50%;
  border: 1px solid #7d8794;
  background: linear-gradient(90deg, #333, #333) center / 8px 2px no-repeat, #f4f6f8;
  flex: none;
}
.zoom-track {
  width: 48px;
  height: 1px;
  background: #eef1f4;
  position: relative;
  flex: none;
}
.zoom-track i {
  position: absolute;
  right: 3px;
  top: -7px;
  width: 8px;
  height: 13px;
  background: #eef1f5;
  border: 1px solid #5c6672;
  border-radius: 1px 1px 4px 4px;
}
.taskbar-edge {
  height: 3px;
  background: linear-gradient(#2d6ca8, #3f86c4);
}
```
